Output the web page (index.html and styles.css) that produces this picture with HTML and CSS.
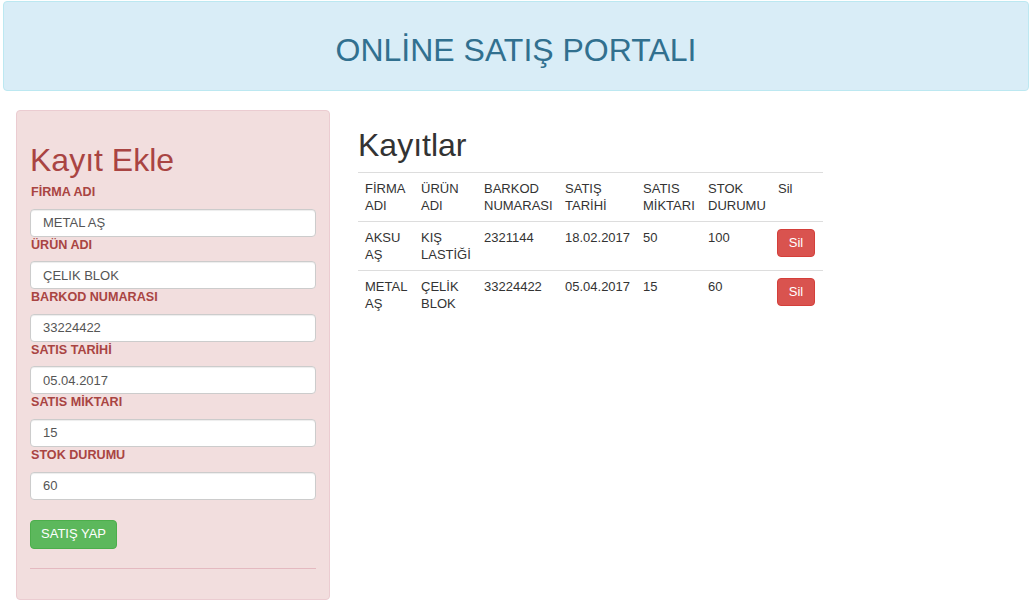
FILE: index.html
```html
<!DOCTYPE html>
<html lang="tr">
<head>
<meta charset="utf-8">
<title>Online Satış Portalı</title>
<link rel="stylesheet" href="styles.css">
</head>
<body>
<div class="page">
  <header class="banner">
    <h1 class="banner-title">ONLİNE SATIŞ PORTALI</h1>
  </header>
  <main class="layout">
    <section class="panel">
      <h2 class="panel-title">Kayıt Ekle</h2>
      <form class="form">
        <label class="field-label">FİRMA ADI</label>
        <input class="field-input" type="text" value="METAL AŞ">
        <label class="field-label">ÜRÜN ADI</label>
        <input class="field-input" type="text" value="ÇELIK BLOK">
        <label class="field-label">BARKOD NUMARASI</label>
        <input class="field-input" type="text" value="33224422">
        <label class="field-label">SATIS TARİHİ</label>
        <input class="field-input" type="text" value="05.04.2017">
        <label class="field-label">SATIS MİKTARI</label>
        <input class="field-input" type="text" value="15">
        <label class="field-label">STOK DURUMU</label>
        <input class="field-input" type="text" value="60">
        <button class="btn btn-success" type="button">SATIŞ YAP</button>
      </form>
      <hr class="panel-rule">
    </section>
    <section class="records">
      <h2 class="records-title">Kayıtlar</h2>
      <table class="table">
        <colgroup>
          <col class="c1"><col class="c2"><col class="c3"><col class="c4"><col class="c5"><col class="c6"><col class="c7">
        </colgroup>
        <thead>
          <tr>
            <th>FİRMA ADI</th>
            <th>ÜRÜN ADI</th>
            <th>BARKOD NUMARASI</th>
            <th>SATIŞ TARİHİ</th>
            <th>SATIS MİKTARI</th>
            <th>STOK DURUMU</th>
            <th>Sil</th>
          </tr>
        </thead>
        <tbody>
          <tr>
            <td>AKSU AŞ</td>
            <td>KIŞ LASTİĞİ</td>
            <td>2321144</td>
            <td>18.02.2017</td>
            <td>50</td>
            <td>100</td>
            <td><button class="btn btn-danger" type="button">Sil</button></td>
          </tr>
          <tr>
            <td>METAL AŞ</td>
            <td>ÇELİK BLOK</td>
            <td>33224422</td>
            <td>05.04.2017</td>
            <td>15</td>
            <td>60</td>
            <td><button class="btn btn-danger" type="button">Sil</button></td>
          </tr>
        </tbody>
      </table>
    </section>
  </main>
</div>
</body>
</html>
```

FILE: styles.css
```css
* { box-sizing: border-box; }
html, body { margin: 0; padding: 0; background: #fff; }
body {
  font-family: "Liberation Sans", Arial, Helvetica, sans-serif;
  font-size: 13px;
  line-height: 17px;
  color: #333;
}
.page { padding: 1px 3px 0; }

.banner {
  height: 90px;
  background: #d9edf7;
  border: 1px solid #bce8f1;
  border-radius: 4px;
  display: flex;
  align-items: center;
  justify-content: center;
  padding-top: 8px;
}
.banner-title {
  margin: 0;
  font-size: 32px;
  line-height: 32px;
  font-weight: normal;
  color: #31708f;
}

.layout {
  display: flex;
  align-items: flex-start;
  margin-top: 19px;
}

.panel {
  margin-left: 13px;
  width: 314px;
  height: 490px;
  background: #f2dede;
  border: 1px solid #ebccd1;
  border-radius: 4px;
  padding: 32px 13px 0;
  color: #a94442;
}
.panel-title {
  margin: 0 0 6px;
  font-size: 32px;
  line-height: 35px;
  font-weight: normal;
  color: #a94442;
}
.form { display: flex; flex-direction: column; align-items: stretch; }
.field-label {
  display: block;
  font-weight: bold;
  font-size: 12.6px;
  line-height: 17px;
  margin-bottom: 7.6px;
  padding-left: 1px;
  color: #a94442;
}
.field-input {
  display: block;
  width: 100%;
  height: 28px;
  padding: 0 12px;
  margin: 0;
  font-family: inherit;
  font-size: 13px;
  color: #555;
  background: #fff;
  border: 1px solid #ccc;
  border-radius: 4px;
  box-shadow: inset 0 1px 1px rgba(0,0,0,.075);
}

.btn {
  display: inline-block;
  font-family: inherit;
  font-size: 13px;
  line-height: 16px;
  padding: 5px 10px;
  border: 1px solid transparent;
  border-radius: 4px;
  color: #fff;
  cursor: pointer;
  white-space: nowrap;
}
.btn-success {
  align-self: flex-start;
  margin-top: 20px;
  width: 87px;
  height: 29px;
  background: #5cb85c;
  border-color: #4cae4c;
}
.btn-danger {
  width: 38px;
  height: 28px;
  padding: 5px 0;
  margin-left: -1px;
  background: #d9534f;
  border-color: #d43f3a;
}

.panel-rule {
  margin: 19px 0 0;
  border: 0;
  border-top: 1px solid #e4b9c0;
}

.records { margin-left: 28px; }
.records-title {
  margin: 18px 0 9px;
  font-size: 32px;
  line-height: 35px;
  font-weight: normal;
  color: #333;
}
.table {
  width: 465px;
  table-layout: fixed;
  border-collapse: collapse;
  border-spacing: 0;
}
.c1 { width: 56px; }
.c2 { width: 63px; }
.c3 { width: 81px; }
.c4 { width: 78px; }
.c5 { width: 65px; }
.c6 { width: 70px; }
.c7 { width: 52px; }
.table th, .table td {
  padding: 7px;
  text-align: left;
  vertical-align: top;
  font-weight: normal;
  border-top: 1px solid #ddd;
  line-height: 17px;
}
```
